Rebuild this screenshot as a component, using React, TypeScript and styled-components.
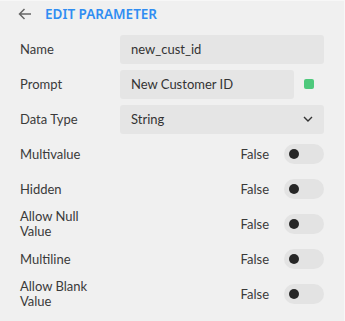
import React from 'react';
import styled, { createGlobalStyle } from 'styled-components';

const GlobalStyle = createGlobalStyle`
  body {
    margin: 0;
    background: #f0f0f0;
    font-family: Lato, "Noto Sans", sans-serif;
  }
`;

const Panel = styled.div`
  width: 345px;
  height: 321px;
  box-sizing: border-box;
  background: #f0f0f0;
  border-top: 1px solid #f7f7f7;
  border-right: 1px solid #f7f7f7;
  padding: 0 20px 0 20px;
  color: #3a3a3a;
  font-size: 13px;
`;

const Header = styled.div`
  display: flex;
  align-items: center;
  height: 26px;
  gap: 12px;
  margin-left: -3px;
`;

const Title = styled.h2`
  margin: 0;
  font-family: "Noto Sans", sans-serif;
  font-size: 13.5px;
  font-weight: 600;
  color: #2f8df2;
`;

const Form = styled.div`
  display: flex;
  flex-direction: column;
  gap: 5px;
  margin-top: 7px;
`;

const Row = styled.div`
  display: flex;
  align-items: center;
  min-height: 30px;
`;

const Label = styled.div<{ $wrap?: boolean }>`
  width: ${(p) => (p.$wrap ? '70px' : '100px')};
  flex-shrink: 0;
  line-height: 15px;
`;

const Field = styled.div<{ $narrow?: boolean }>`
  display: flex;
  align-items: center;
  justify-content: space-between;
  height: 29px;
  width: ${(p) => (p.$narrow ? '174px' : '204px')};
  box-sizing: border-box;
  padding: 0 11px;
  background: #e5e5e5;
  border-radius: 3px;
  color: #333;
`;

const ColorSwatch = styled.div`
  width: 10px;
  height: 10px;
  border-radius: 2px;
  background: #4ec97c;
  margin-left: 10px;
`;

const ToggleGroup = styled.div`
  margin-left: auto;
  display: flex;
  align-items: center;
  gap: 15px;
`;

const Track = styled.div`
  width: 40px;
  height: 20px;
  border-radius: 10px;
  background: #e3e3e3;
  display: flex;
  align-items: center;
  padding-left: 5px;
  box-sizing: border-box;
`;

const Knob = styled.div`
  width: 10px;
  height: 10px;
  border-radius: 50%;
  background: #262626;
`;

const BackArrow = () => (
  <svg width="16" height="16" viewBox="0 0 16 16" fill="none" stroke="#666" strokeWidth="1.5">
    <path d="M14 8H2.5M7.5 3L2.5 8l5 5" />
  </svg>
);

const Chevron = () => (
  <svg width="10" height="6" viewBox="0 0 10 6" fill="none" stroke="#333" strokeWidth="1.4">
    <path d="M1 1l4 4 4-4" />
  </svg>
);

const toggles = ['Multivalue', 'Hidden', 'Allow Null Value', 'Multiline', 'Allow Blank Value'];

const Toggle = () => (
  <ToggleGroup>
    <span>False</span>
    <Track>
      <Knob />
    </Track>
  </ToggleGroup>
);

export default function App() {
  return (
    <>
      <GlobalStyle />
      <Panel>
        <Header>
          <BackArrow />
          <Title>EDIT PARAMETER</Title>
        </Header>
        <Form>
          <Row>
            <Label>Name</Label>
            <Field>new_cust_id</Field>
          </Row>
          <Row>
            <Label>Prompt</Label>
            <Field $narrow>New Customer ID</Field>
            <ColorSwatch />
          </Row>
          <Row>
            <Label>Data Type</Label>
            <Field>
              String
              <Chevron />
            </Field>
          </Row>
          {toggles.map((t) => (
            <Row key={t}>
              <Label $wrap={t.startsWith('Allow')}>{t}</Label>
              <Toggle />
            </Row>
          ))}
        </Form>
      </Panel>
    </>
  );
}
